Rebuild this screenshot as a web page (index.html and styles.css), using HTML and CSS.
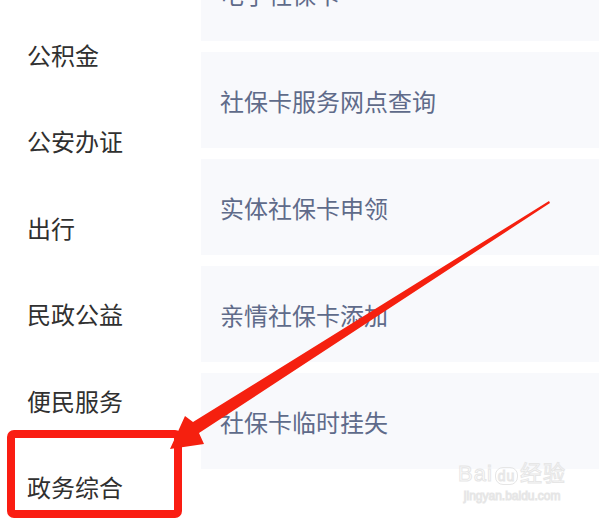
FILE: index.html
```html
<!DOCTYPE html>
<html lang="zh-CN">
<head>
    <meta charset="UTF-8">
    <title>社保卡服务</title>
    <link rel="stylesheet" href="styles.css">
</head>
<body>
    <div class="page">
        <!-- category menu -->
        <ul class="menu">
            <li>公积金</li>
            <li>公安办证</li>
            <li>出行</li>
            <li>民政公益</li>
            <li>便民服务</li>
            <li>政务综合</li>
        </ul>

        <!-- service list -->
        <div class="services">
            <div class="card">电子社保卡</div>
            <div class="card">社保卡服务网点查询</div>
            <div class="card">实体社保卡申领</div>
            <div class="card">亲情社保卡添加</div>
            <div class="card">社保卡临时挂失</div>
            <div class="section-title"><span class="mark">R</span><span class="more">更多服务</span></div>
        </div>
    </div>

    <!-- annotation drawn over the screenshot -->
    <div class="highlight"></div>
    <svg class="arrow" width="599" height="519" viewBox="0 0 599 519">
        <polygon points="549,201 193,422 185,416 170,449 204,444 199,433 550,203" fill="#f5200f"/>
    </svg>

    <div class="watermark">
        <div class="wm-logo">Bai<span class="paw">du</span>经验</div>
        <div class="wm-url">jingyan.baidu.com</div>
    </div>
</body>
</html>
```

FILE: styles.css
```css
body {
    margin: 0;
    padding: 0;
    background-color: #ffffff;
    font-family: "Noto Sans CJK SC", "Noto Sans", sans-serif;
    overflow: hidden;
    width: 599px;
    height: 519px;
    position: relative;
}
.page {
    display: flex;
    height: 519px;
    overflow: hidden;
}
.menu {
    list-style: none;
    margin: 0;
    padding: 11px 0 0 0;
    width: 201px;
    flex-shrink: 0;
}
.menu li {
    height: 86.5px;
    display: flex;
    align-items: center;
    padding-left: 27px;
    font-size: 24px;
    color: #303030;
}
.services {
    flex: 1;
    display: flex;
    flex-direction: column;
    gap: 11px;
}
.card {
    height: 96px;
    flex-shrink: 0;
    background-color: #f8f9fc;
    display: flex;
    align-items: center;
    padding-left: 19px;
    font-size: 24px;
    color: #5f6b8a;
}
.card:first-child {
    margin-top: -55px;
}
.section-title {
    margin-top: 36px;
    display: flex;
    align-items: center;
    font-size: 24px;
    flex-shrink: 0;
}
.section-title .mark {
    color: #333333;
    margin-left: 8px;
}
.section-title .more {
    color: #999999;
    margin-left: 128px;
}
.highlight {
    position: absolute;
    left: 7px;
    top: 430px;
    width: 159px;
    height: 72px;
    border: 8px solid #fa1d12;
    border-radius: 7px;
}
.arrow {
    position: absolute;
    left: 0;
    top: 0;
}
.watermark {
    position: absolute;
    left: 458px;
    top: 455px;
    color: transparent;
    -webkit-text-stroke: 1px #e6e6e6;
    font-family: "Liberation Sans", sans-serif;
    text-align: center;
}
.wm-logo {
    font-size: 22px;
    letter-spacing: 1px;
}
.wm-logo .paw {
    font-size: 14px;
    border: 1px solid #e6e6e6;
    border-radius: 8px;
    padding: 0 2px;
    margin: 0 2px;
}
.wm-url {
    font-size: 12px;
    margin-top: 2px;
}
```
